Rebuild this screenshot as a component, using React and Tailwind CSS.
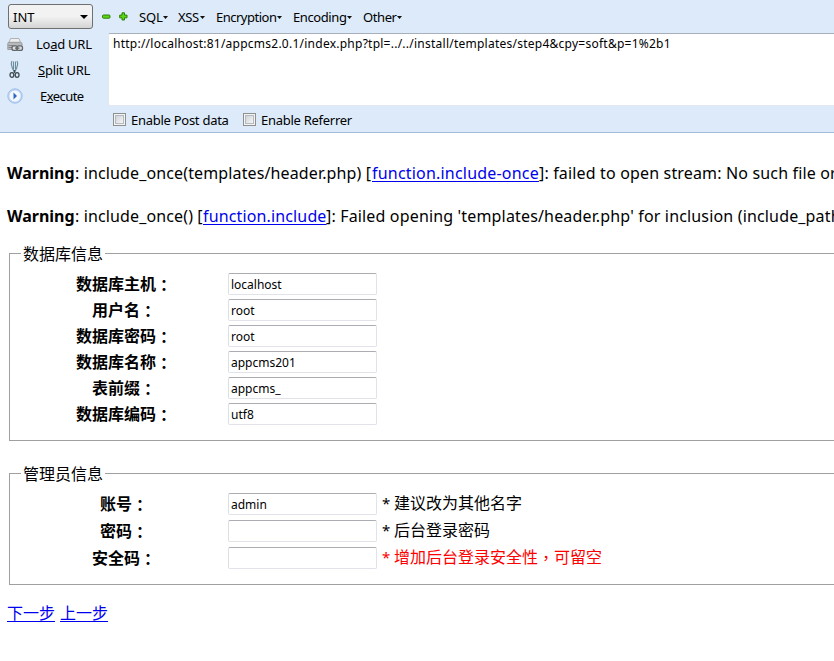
function Caret() {
  return (
    <svg width="5" height="3" viewBox="0 0 5 3" className="mt-px shrink-0">
      <path d="M0 0h5L2.5 3z" fill="#111" />
    </svg>
  );
}

function MenuItem({ label, className }) {
  return (
    <div className={`flex shrink-0 items-center whitespace-nowrap ${className}`}>
      <span className="grow">{label}</span>
      <Caret />
    </div>
  );
}

function LoadIcon() {
  return (
    <svg width="17" height="16" viewBox="0 0 17 16">
      <path d="M3.500 1.500h8.500l1.500 4h-11.500z" fill="#eceeef" stroke="#b0b3b6" />
      <path d="M.8 6.500q0-1.200 1.200-1.200h11.500q1.500 0 1.500 1.500v5.700h-14.200z" fill="#b7b9bb" stroke="#9a9da0" />
      <path d="M1.500 8.500h5M1.500 10.500h4" stroke="#85888a" />
      <rect x="5" y="8.800" width="5.500" height="4.600" rx="2" fill="#dfe0e1" stroke="#63676a" strokeWidth="1.300" />
      <rect x="10" y="8.800" width="5.500" height="4.600" rx="2" fill="#dfe0e1" stroke="#63676a" strokeWidth="1.300" />
      <path d="M8 11.100h4.500" stroke="#55595c" strokeWidth="1.200" />
    </svg>
  );
}

function ScissorsIcon() {
  return (
    <svg width="11" height="19" viewBox="0 0 11 19" fill="none">
      <path d="M3 1C1.200 4 2.500 7 5 11.500M4.500 1.500v8M8 1c1.800 3 .5 6-2 10.500M6.500 1.500v8" stroke="#6c8c9c" strokeWidth="1.100" />
      <path d="M5.500 10v3" stroke="#3c4a52" strokeWidth="1.500" />
      <ellipse cx="2.900" cy="15" rx="1.900" ry="2.400" stroke="#3f4b52" strokeWidth="1.300" />
      <ellipse cx="8.100" cy="15" rx="1.900" ry="2.400" stroke="#3f4b52" strokeWidth="1.300" />
    </svg>
  );
}

function ExecuteIcon() {
  return (
    <svg width="16" height="16" viewBox="0 0 16 16">
      <circle cx="8" cy="8" r="7.200" fill="#bed5f3" stroke="#9fbfec" />
      <circle cx="8" cy="8" r="5.600" fill="#f4f8fe" />
      <path d="M6.500 4.500l3.500 3.500-3.500 3.500z" fill="#2c68c0" />
    </svg>
  );
}

function Check({ label, className }) {
  return (
    <div className="flex items-center gap-[5px]">
      <span className="size-[13px] border border-[#8e8f8f] bg-[#f4f4f4] p-px">
        <span className="block size-full border border-[#b5bac0] bg-linear-to-br from-[#cfd3d8] to-[#f6f6f6]" />
      </span>
      <span className={className}>{label}</span>
    </div>
  );
}

function Box({ value }) {
  return (
    <div className="h-[22px] w-[149px] shrink-0 rounded-[2px] border border-[#e2e3ea] border-t-[#abadb3] border-l-[#dbdfe6] bg-white pl-[2px] text-[12px] leading-[21px]">
      {value}
    </div>
  );
}

// Full-width punctuation is centred in its cell.
function Mark({ children }) {
  return <span className='align-[-1px] leading-none font-["Noto_Sans_CJK_TC",sans-serif]' lang="zh-TW">{children}</span>;
}

function Row({ label, value, note, className = 'h-[26px]', noteClass = '' }) {
  return (
    <div className={`flex items-center ${className}`}>
      <div className="w-[218px] shrink-0 pr-[12px] pl-[22px] text-center text-[16px] leading-[22px] font-bold">
        {label}
        <Mark>：</Mark>
      </div>
      <Box value={value} />
      {note && (
        <div className={`ml-[5px] flex pb-px text-[16px] leading-[22px] whitespace-nowrap ${noteClass}`}>
          <span className="w-[12px] text-[15px]">*</span>
          <span>{note}</span>
        </div>
      )}
    </div>
  );
}

function Group({ title, className, children }) {
  return (
    <fieldset className={`w-[840px] border border-[#a0a0a0] ${className}`}>
      <legend className="ml-[11px] h-[22px] pt-px pr-[2px] pl-[2px] text-[16px] leading-[22px]">{title}</legend>
      {children}
    </fieldset>
  );
}

const link = 'text-[#0000ee] underline underline-offset-2';

export default function App() {
  return (
    <div className='h-[661px] w-[834px] overflow-hidden bg-white font-["Noto_Sans","Noto_Sans_CJK_SC",sans-serif] text-black'>
      <header className="flex h-[133px] flex-col border-b border-[#a3bcd9] bg-[#dceaf9] text-[13px] leading-[18px]">
        <div className="flex h-[33px] shrink-0 items-center pl-2">
          <div className="flex h-[25px] w-[85px] shrink-0 items-center justify-between rounded-[3px] border border-[#707070] bg-linear-to-b from-[#f2f2f2] from-50% to-[#d4d4d4] pr-[4px] pl-[4px]">
            <span>INT</span>
            <svg width="8" height="4" viewBox="0 0 8 4">
              <path d="M0 0h8L4 4z" fill="#000" />
            </svg>
          </div>
          <svg width="9" height="9" viewBox="0 0 9 9" className="ml-[9px] shrink-0">
            <rect x=".5" y="3" width="7.500" height="3.200" rx="1" fill="#5ed514" stroke="#2b8008" />
          </svg>
          <svg width="9" height="9" viewBox="0 0 9 9" className="ml-[8px] shrink-0">
            <path d="M3 .8h2.500v2.300H8v2.700H5.500V8H3V5.800H.7V3.100H3z" fill="#5ed514" stroke="#2b8008" />
          </svg>
          <MenuItem label="SQL" className="ml-[11px] w-[28px] tracking-[-0.2px]" />
          <MenuItem label="XSS" className="ml-[11px] w-[27px] tracking-[-0.4px]" />
          <MenuItem label="Encryption" className="ml-[11px] w-[66px] tracking-[-0.5px]" />
          <MenuItem label="Encoding" className="ml-[11px] w-[59px] tracking-[-0.4px]" />
          <MenuItem label="Other" className="ml-[11px] w-[38px] tracking-[-0.4px]" />
        </div>
        <div className="flex h-[99px] shrink-0">
          <div className="w-[108px] shrink-0">
            <div className="flex h-[22px] items-center">
              <span className="w-[36px] pt-px pl-[7px]"><LoadIcon /></span>
              <span className="tracking-[-0.25px]">Lo<u>a</u>d URL</span>
            </div>
            <div className="flex h-[28px] items-center">
              <span className="w-[38px] pl-[9px]"><ScissorsIcon /></span>
              <span className="pt-[2px] tracking-[-0.25px]"><u>S</u>plit URL</span>
            </div>
            <div className="flex h-[26px] items-center">
              <span className="w-[40px] pl-[7px]"><ExecuteIcon /></span>
              <span className="tracking-[-0.55px]">E<u>x</u>ecute</span>
            </div>
          </div>
          <div className="grow">
            <div className="h-[73px] w-[740px] rounded-[2px] border border-r-0 border-[#e2e8f0] border-t-[#a6afba] bg-white pl-[4px] text-[12px] leading-[20px] tracking-[0.245px] whitespace-nowrap">
              http://localhost:81/appcms2.0.1/index.php?tpl=../../install/templates/step4&amp;cpy=soft&amp;p=1%2b1
            </div>
            <div className="flex h-[27px] items-center gap-[14px] pl-[5px]">
              <Check label="Enable Post data" className="w-[98px] whitespace-nowrap tracking-[-0.27px]" />
              <Check label="Enable Referrer" className="whitespace-nowrap tracking-[-0.27px]" />
            </div>
          </div>
        </div>
      </header>

      <main className="pt-[29px] pl-[7px]">
        <p className="flex h-[22px] text-[16px] leading-[22px] whitespace-pre">
          <b className="w-[68px] shrink-0">Warning</b>
          <span className="w-[297px] shrink-0 tracking-[0.13px]">: include_once(templates/header.php) [</span>
          <a className={`w-[167px] shrink-0 tracking-[0.2px] ${link}`}>function.include-once</a>
          <span className="tracking-[0.16px]">]: failed to open stream: No such file or</span>
        </p>
        <p className="mt-[21px] flex h-[22px] text-[16px] leading-[22px] whitespace-pre">
          <b className="w-[68px] shrink-0">Warning</b>
          <span className="w-[128px] shrink-0 tracking-[0.13px]">: include_once() [</span>
          <a className={`w-[123px] shrink-0 tracking-[0.14px] ${link}`}>function.include</a>
          <span className="tracking-[0.16px]">]: Failed opening 'templates/header.php' for inclusion (include_path</span>
        </p>

        <Group title="数据库信息" className="mt-[15px] ml-[2px] h-[199px]">
          <div className="pt-[7px]">
            <Row label="数据库主机" value="localhost" />
            <Row label="用户名" value="root" />
            <Row label="数据库密码" value="root" />
            <Row label="数据库名称" value="appcms201" />
            <Row label="表前缀" value="appcms_" />
            <Row label="数据库编码" value="utf8" />
          </div>
        </Group>
        <Group title="管理员信息" className="mt-[21px] ml-[2px] h-[123px]">
          <div className="pt-[6px]">
            <Row label="账号" value="admin" note="建议改为其他名字" className="h-[27px]" />
            <Row label="密码" note="后台登录密码" className="h-[27px]" />
            <Row
              label="安全码"
              note={<>增加后台登录安全性<Mark>，</Mark>可留空</>}
              className="h-[27px]"
              noteClass="text-[#ff0000]"
            />
          </div>
        </Group>
        <nav className="mt-[17px] flex gap-[5px] text-[16px] leading-[22px]">
          <a className={link}>下一步</a>
          <a className={link}>上一步</a>
        </nav>
      </main>
    </div>
  );
}
